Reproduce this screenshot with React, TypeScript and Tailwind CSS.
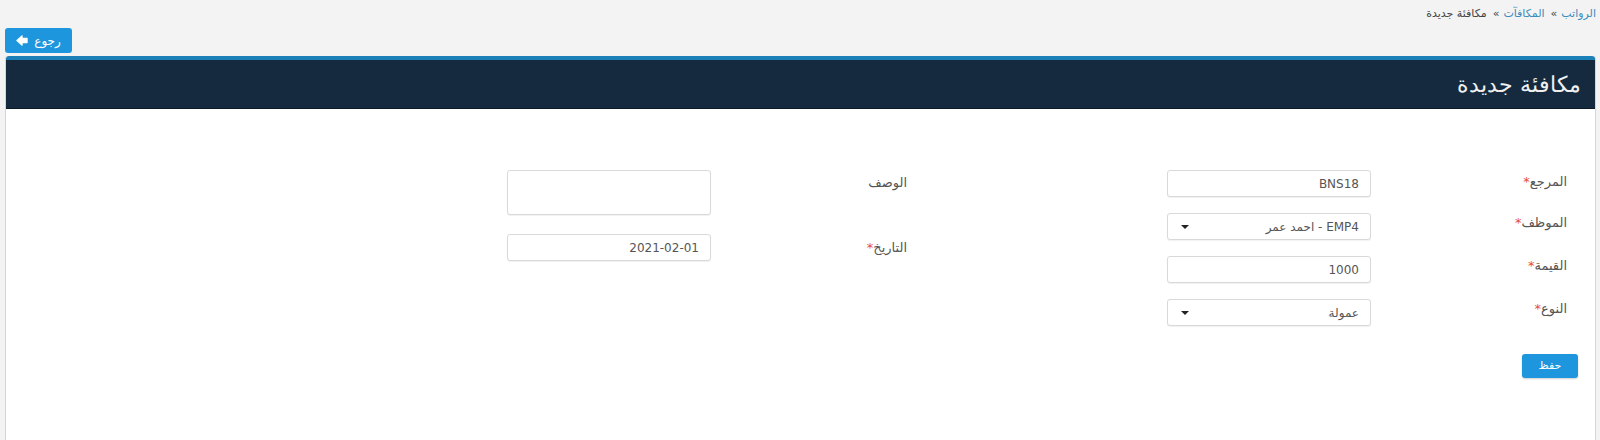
import React from "react";

const font = { fontFamily: '"DejaVu Sans", "Noto Sans", sans-serif' };

function Label({ text, req }: { text: string; req?: boolean }) {
  return (
    <div className="w-[196px] shrink-0 text-[13px] text-[#555] leading-[20px]">
      {text}
      {req && <span className="text-[#e74c3c]">*</span>}
    </div>
  );
}

function Input({ value }: { value: string }) {
  return (
    <div className="w-[204px] h-[27px] border border-[#d9d9d9] rounded-[3px] bg-white shadow-[0_1px_1px_rgba(0,0,0,0.06)] flex items-center px-[11px] text-[12px] text-[#555]">
      {value}
    </div>
  );
}

function Select({ value }: { value: string }) {
  return (
    <div className="w-[204px] h-[27px] border border-[#d9d9d9] rounded-[3px] bg-white shadow-[0_1px_1px_rgba(0,0,0,0.06)] flex items-center justify-between pr-[11px] pl-[13px] text-[12px] text-[#555]">
      <span>{value}</span>
      <span className="w-0 h-0 border-l-[4px] border-r-[4px] border-t-[4px] border-l-transparent border-r-transparent border-t-[#222]" />
    </div>
  );
}

export default function App() {
  return (
    <div dir="rtl" style={font} className="w-[1600px] h-[440px] overflow-hidden bg-[#f3f3f3]">
      <div className="h-[28px] pr-[4px] flex items-center text-[11px] text-[#444] gap-[4px]">
        <span className="text-[#3c8dbc]">الرواتب</span>
        <span>»</span>
        <span className="text-[#3c8dbc] mr-[2px]">المكافآت</span>
        <span>»</span>
        <span className="mr-[2px]">مكافئة جديدة</span>
      </div>
      <div className="flex justify-end pl-[5px] h-[28px]">
        <div className="w-[67px] h-[25px] rounded-[3px] bg-[#1e96dd] text-white text-[12px] flex items-center justify-center gap-[6px]">
          <span>رجوع</span>
          <svg width="12" height="11" viewBox="0 0 12 11">
            <path
              d="M1 5.5 L6 1 L6 3.5 L11 3.5 L11 7.5 L6 7.5 L6 10 Z"
              fill="white"
              stroke="white"
              strokeWidth="1.4"
              strokeLinejoin="round"
            />
          </svg>
        </div>
      </div>
      <div className="ml-[5px] mr-[4px] border-l border-r border-b border-[#d6d6d6] bg-white rounded-t-[3px]">
        <div className="border-t-[4px] border-[#1b7fb8] bg-[#152a3f] h-[53px] rounded-t-[3px] flex items-center pr-[14px] border-b border-b-[#0d1b29]">
          <span className="text-[22px] text-[#f0f0f0] font-light">مكافئة جديدة</span>
        </div>
        <div className="h-[331px] pt-[61px] pr-[28px]">
          <div className="flex">
            <div className="w-[660px] flex flex-col gap-[16px]">
              <div className="flex items-start">
                <div className="pt-[2px]"><Label text="المرجع" req /></div>
                <Input value="BNS18" />
              </div>
              <div className="flex items-start">
                <div><Label text="الموظف" req /></div>
                <Select value="EMP4 - احمد عمر" />
              </div>
              <div className="flex items-start">
                <div><Label text="القيمة" req /></div>
                <Input value="1000" />
              </div>
              <div className="flex items-start">
                <div><Label text="النوع" req /></div>
                <Select value="عمولة" />
              </div>
            </div>
            <div className="w-[660px] flex flex-col gap-[19px]">
              <div className="flex items-start">
                <div className="pt-[3px]"><Label text="الوصف" /></div>
                <div className="w-[204px] h-[45px] border border-[#d9d9d9] rounded-[3px] bg-white shadow-[0_1px_1px_rgba(0,0,0,0.06)]" />
              </div>
              <div className="flex items-center">
                <Label text="التاريخ" req />
                <Input value="2021-02-01" />
              </div>
            </div>
          </div>
          <div className="flex mt-[28px] mr-[-11px]">
            <div className="w-[56px] h-[24px] rounded-[3px] bg-[#1e96dd] text-white text-[11px] flex items-center justify-center shadow-[0_1px_2px_rgba(0,0,0,0.2)]">
              حفظ
            </div>
          </div>
        </div>
      </div>
    </div>
  );
}
